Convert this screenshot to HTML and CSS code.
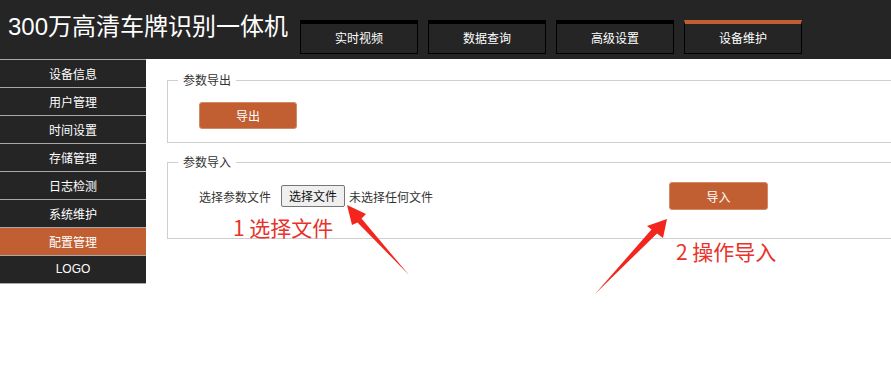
FILE: index.html
```html
<!DOCTYPE html>
<html lang="zh-CN">
<head>
<meta charset="utf-8">
<title>300万高清车牌识别一体机</title>
<link rel="stylesheet" href="styles.css">
</head>
<body>
<header class="topbar">
  <h1 class="title">300万高清车牌识别一体机</h1>
  <nav class="tabs">
    <a class="tab">实时视频</a>
    <a class="tab">数据查询</a>
    <a class="tab">高级设置</a>
    <a class="tab active">设备维护</a>
  </nav>
</header>
<div class="body">
  <aside class="sidebar">
    <a class="side-item">设备信息</a>
    <a class="side-item">用户管理</a>
    <a class="side-item">时间设置</a>
    <a class="side-item">存储管理</a>
    <a class="side-item">日志检测</a>
    <a class="side-item">系统维护</a>
    <a class="side-item active">配置管理</a>
    <a class="side-item logo">LOGO</a>
  </aside>
  <main class="content">
    <fieldset class="group">
      <legend class="legend">参数导出</legend>
      <div class="row">
        <button class="btn">导出</button>
      </div>
    </fieldset>
    <fieldset class="group">
      <legend class="legend">参数导入</legend>
      <div class="row import-row">
        <span class="label">选择参数文件</span>
        <span class="file-btn">选择文件</span>
        <span class="file-name">未选择任何文件</span>
        <button class="btn btn-import">导入</button>
      </div>
    </fieldset>
  </main>
</div>

<div class="note note-1">1 选择文件</div>
<div class="note note-2">2 操作导入</div>
<svg class="arrows" width="891" height="377" viewBox="0 0 891 377">
  <polygon fill="#f2261d" points="347,205 366,214 361.5,218.5 409,275 357.5,222.5 352,225"/>
  <polygon fill="#f2261d" points="667,219 663,238 657,233.5 595,294 651.5,229.5 647,226"/>
</svg>
</body>
</html>
```

FILE: styles.css
```css
* { box-sizing: border-box; }
html, body {
  margin: 0;
  padding: 0;
  background: #fff;
  font-family: "Noto Sans CJK SC", "Liberation Sans", sans-serif;
  overflow: hidden;
}
body { position: relative; width: 891px; height: 377px; }

.topbar {
  height: 59px;
  background: #252525;
  display: flex;
  align-items: flex-start;
}
.title {
  margin: 0;
  padding: 10px 0 0 8px;
  font-family: "Liberation Sans", "Noto Sans CJK SC", sans-serif;
  font-weight: normal;
  font-size: 24px;
  line-height: 34px;
  color: #fff;
  white-space: nowrap;
}
.tabs {
  display: flex;
  gap: 10px;
  margin-left: 12px;
  margin-top: 20px;
}
.tab {
  width: 118px;
  height: 34px;
  border: 1px solid #000;
  border-top: 4px solid #000;
  background: #252525;
  color: #fff;
  font-size: 12px;
  line-height: 28px;
  text-align: center;
}
.tab.active { border-top-color: #c15f33; }

.body { display: flex; align-items: flex-start; }
.sidebar {
  width: 146px;
  flex: none;
  display: flex;
  flex-direction: column;
  background: #252525;
  border-bottom: 1px solid #a8a8a8;
}
.side-item {
  height: 28px;
  border-top: 1px solid #a8a8a8;
  color: #fff;
  font-size: 12px;
  line-height: 27px;
  text-align: center;
}
.side-item.active { background: #c15f33; }
.side-item.logo { font-family: "Liberation Sans", sans-serif; font-size: 12px; }

.content {
  flex: 1;
  padding: 13px 0 0 21px;
  min-width: 0;
}
.group {
  margin: 0 0 11px 0;
  padding: 0 0 13px 0;
  border: 1px solid #cfcfcf;
  border-right: none;
  min-width: 0;
}
.legend {
  margin-left: 10px;
  padding: 0 5px;
  font-size: 12px;
  line-height: 16px;
  color: #333;
}
.row {
  display: flex;
  align-items: center;
  padding: 14px 0 0 31px;
}
.btn {
  width: 98px;
  height: 27px;
  padding: 0;
  background: #c15f33;
  border: 1px solid #d08a66;
  border-radius: 3px;
  color: #fff;
  font-family: "Noto Sans CJK SC", sans-serif;
  font-size: 12px;
  line-height: 25px;
}
.import-row { padding-top: 12px; padding-bottom: 15px; }
.label { font-size: 12px; color: #333; margin-right: 10px; }
.file-btn {
  height: 22px;
  padding: 0 7px;
  border: 1px solid #767676;
  border-radius: 2px;
  background: #efefef;
  font-size: 12px;
  line-height: 20px;
  color: #111;
}
.file-name { font-size: 12px; color: #333; margin-left: 4px; }
.btn-import { width: 99px; height: 28px; margin-left: 236px; }

.note {
  position: absolute;
  color: #e8322b;
  font-size: 21px;
  line-height: 24px;
  white-space: nowrap;
}
.note-1 { left: 233px; top: 215px; }
.note-2 { left: 676px; top: 239px; }
.arrows { position: absolute; left: 0; top: 0; pointer-events: none; }
```
